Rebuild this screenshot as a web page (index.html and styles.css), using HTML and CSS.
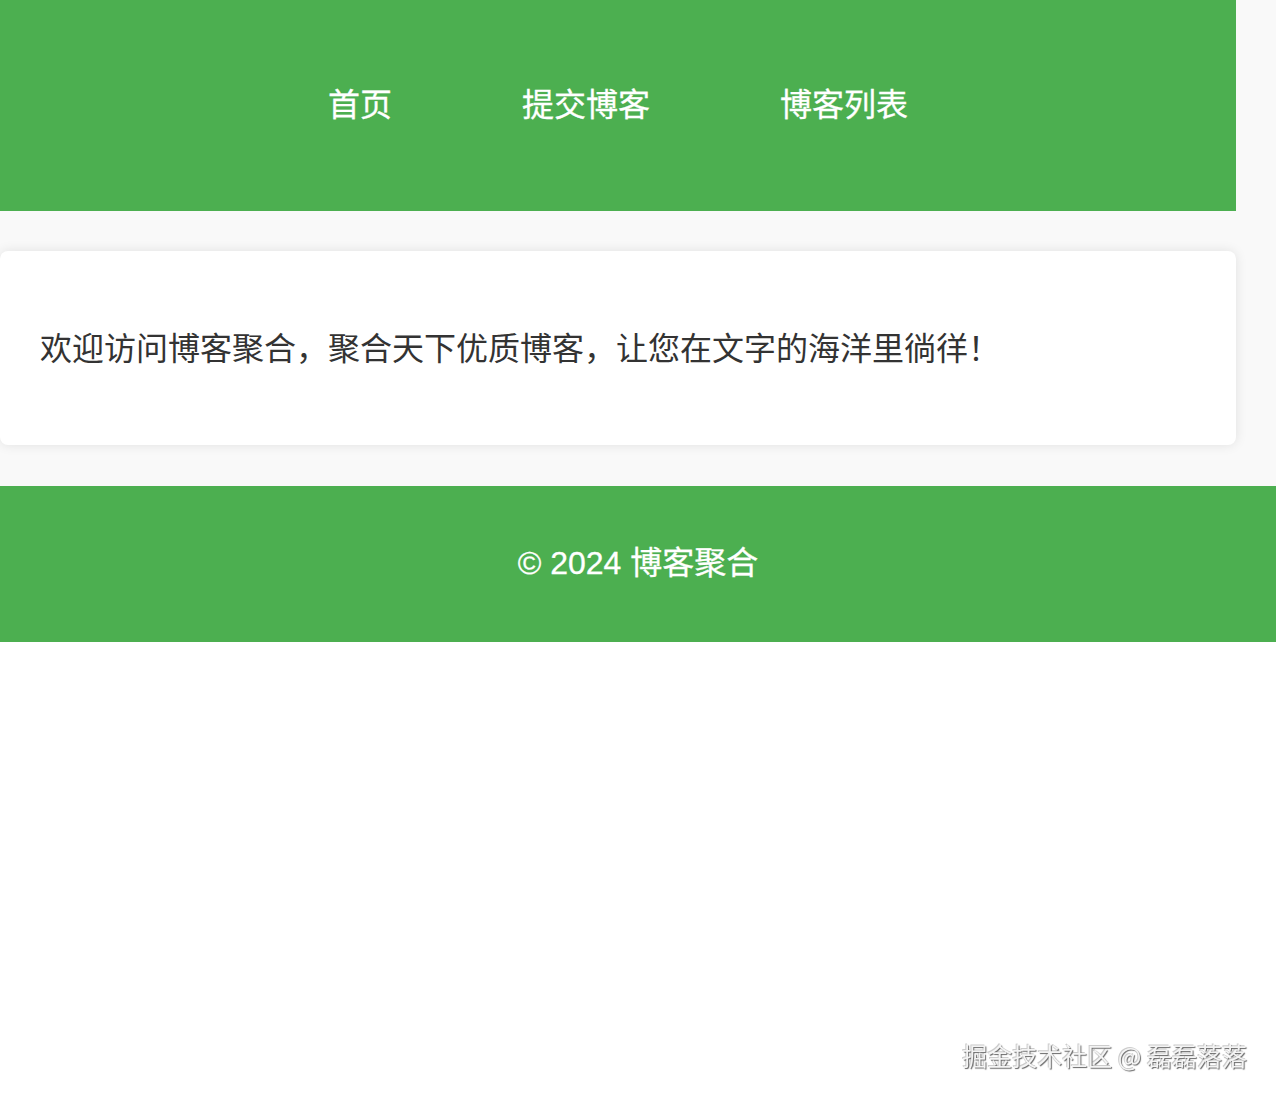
FILE: index.html
```html
<!DOCTYPE html>
<html lang="zh-CN">
<head>
<meta charset="utf-8">
<title>博客聚合</title>
<link rel="stylesheet" href="styles.css">
</head>
<body>
<header class="site-header">
  <nav class="nav">
    <a class="nav-link" href="#">首页</a>
    <a class="nav-link" href="#">提交博客</a>
    <a class="nav-link" href="#">博客列表</a>
  </nav>
</header>
<main class="main">
  <section class="card">
    <p class="welcome">欢迎访问博客聚合，聚合天下优质博客，让您在文字的海洋里徜徉！</p>
  </section>
</main>
<footer class="site-footer">
  <p class="copyright">© 2024 博客聚合</p>
</footer>
<div class="watermark">掘金技术社区 @ 磊磊落落</div>
</body>
</html>
```

FILE: styles.css
```css
html {
  background: #ffffff;
}
body {
  margin: 0;
  background: #f9f9f9;
  font-family: "Liberation Sans", "Noto Sans CJK SC", sans-serif;
  color: #333333;
}
.site-header {
  width: 1236px;
  height: 211px;
  background: #4caf50;
  display: flex;
  align-items: center;
  justify-content: center;
}
.nav {
  display: flex;
  gap: 130px;
  margin-top: -7px;
}
.nav-link {
  color: #ffffff;
  text-decoration: none;
  font-size: 32px;
  line-height: 48px;
  font-family: "Noto Sans CJK SC", sans-serif;
  font-weight: 400;
  -webkit-text-stroke: 0.3px #ffffff;
}
.main {
  padding: 40px 0 41px;
  width: 1236px;
}
.card {
  background: #ffffff;
  border-radius: 8px;
  box-shadow: 0 0 12px rgba(0, 0, 0, 0.1);
  height: 194px;
  padding: 0 40px 4px;
  box-sizing: border-box;
  display: flex;
  align-items: center;
}
.welcome {
  margin: 0;
  font-size: 32px;
  line-height: 48px;
  color: #333333;
  font-family: "Noto Sans CJK SC", sans-serif;
}
.site-footer {
  background: #4caf50;
  height: 156px;
  padding-bottom: 2px;
  box-sizing: border-box;
  display: flex;
  align-items: center;
  justify-content: center;
}
.copyright {
  margin: 0;
  color: #ffffff;
  font-size: 32px;
  line-height: 48px;
  -webkit-text-stroke: 0.3px #ffffff;
}
.watermark {
  position: fixed;
  right: 29px;
  bottom: 27px;
  font-family: "Noto Sans CJK SC", sans-serif;
  font-size: 25px;
  color: #f4f4f4;
  text-shadow: 1px 1px 1px #666666, -1px -1px 0 #cccccc;
}
```
